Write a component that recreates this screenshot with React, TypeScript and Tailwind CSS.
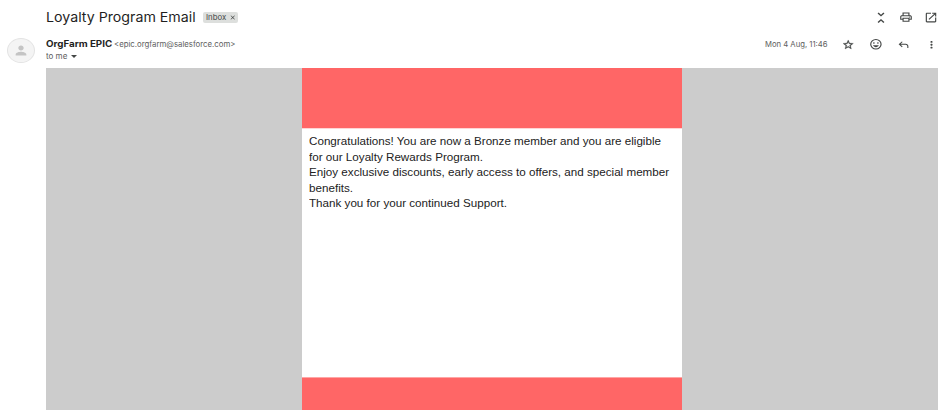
import type { ReactNode } from "react";

function Icon({ d, className, box = "0 0 24 24", children }: { d?: string; className: string; box?: string; children?: ReactNode }) {
  return (
    <svg viewBox={box} preserveAspectRatio="none" fill="currentColor" className={`shrink-0 ${className}`}>
      {d && <path d={d} />}
      {children}
    </svg>
  );
}

function Cell({ className, children }: { className: string; children: ReactNode }) {
  return <div className={`flex shrink-0 items-center justify-center ${className}`}>{children}</div>;
}

const lines = [
  "Congratulations! You are now a Bronze member and you are eligible",
  "for our Loyalty Rewards Program.",
  "Enjoy exclusive discounts, early access to offers, and special member",
  "benefits.",
  "Thank you for your continued Support.",
];

export default function App() {
  return (
    <div className="flex h-[410px] w-[940px] flex-col overflow-hidden bg-white font-['Inter','Liberation_Sans',sans-serif] text-[#444746]">
      <header className="flex h-[35px] shrink-0 items-center pl-[46px]">
        <h1 className="w-[157px] whitespace-nowrap text-[13.4px] leading-[35px] text-[#1f1f1f]">
          <span className="inline-block origin-left scale-x-[1.06]">Loyalty Program Email</span>
        </h1>
        <div className="flex h-[11px] w-[35px] items-center rounded-[2px] bg-[#dddfdd] pl-[3px] text-[7.6px] leading-[11px]">
          <span className="w-[23px]"><span className="inline-block origin-left scale-x-[1.03]">Inbox</span></span>
          <Icon className="h-[7px] w-[7.5px]" d="M19 6.41 17.59 5 12 10.59 6.41 5 5 6.41 10.59 12 5 17.59 6.41 19 12 13.41 17.59 19 19 17.59 13.41 12z" />
        </div>
        <div className="ml-auto flex items-center pr-[1px]">
          <Cell className="w-[26px]">
            <Icon className="h-[15.5px] w-[18px]" d="M7.41 18.59 8.83 20 12 16.83 15.17 20l1.41-1.41L12 14l-4.59 4.59zM16.59 5.41 15.17 4 12 7.17 8.83 4 7.41 5.41 12 10l4.59-4.59z" />
          </Cell>
          <Cell className="w-[24px]">
            <Icon className="h-[12.4px] w-[14px]" d="M19 8h-1V3H6v5H5c-1.66 0-3 1.34-3 3v6h4v4h12v-4h4v-6c0-1.66-1.34-3-3-3zM8 5h8v3H8V5zm8 12v2H8v-4h8v2zm2-2v-2H6v2H4v-4c0-.55.45-1 1-1h14c.55 0 1 .45 1 1v4h-2z">
              <circle cx="18" cy="11.5" r="1" />
            </Icon>
          </Cell>
          <Cell className="w-[21px] pl-[5px]">
            <Icon className="h-[13px] w-[14px]" d="M19 19H5V5h7V3H5c-1.11 0-2 .9-2 2v14c0 1.1.89 2 2 2h14c1.1 0 2-.9 2-2v-7h-2v7zM14 3v2h3.59l-9.83 9.83 1.41 1.41L19 6.41V10h2V3h-7z" />
          </Cell>
        </div>
      </header>

      <section className="flex h-[33px] shrink-0">
        <div className="w-[46px] pl-[7px] pt-[3px]">
          <div className="flex h-[25px] w-[28px] items-center justify-center rounded-[50%] border border-[#e3e3e3] bg-[#f4f4f4] text-[#c4c4c4]">
            <Icon className="h-[15px] w-[16px]" d="M12 12c2.21 0 4-1.79 4-4s-1.79-4-4-4-4 1.79-4 4 1.79 4 4 4zm0 2c-2.67 0-8 1.34-8 4v2h16v-2c0-2.66-5.33-4-8-4z" />
          </div>
        </div>
        <div className="pt-[3px]">
          <div className="flex h-[12px] items-center whitespace-nowrap leading-[12px]">
            <span className="w-[68px] text-[8.8px] font-bold text-[#1f1f1f]">
              <span className="inline-block origin-left scale-x-[1.11]">OrgFarm EPIC</span>
            </span>
            <span className="text-[7.8px] text-[#5e5e5e]">&lt;epic.orgfarm@salesforce.com&gt;</span>
          </div>
          <div className="flex h-[12px] items-center text-[7.8px] leading-[12px] text-[#5e5e5e]">
            <span className="w-[25px] whitespace-nowrap"><span className="inline-block origin-left scale-x-[1.03]">to me</span></span>
            <Icon className="h-[3px] w-[6px] text-[#444746]" box="0 0 10 5" d="M0 0h10L5 5z" />
          </div>
        </div>
        <div className="ml-auto flex h-[19px] items-center">
          <span className="w-[70px] whitespace-nowrap text-[7.8px] text-[#5e5e5e]">
            <span className="inline-block origin-left scale-x-[0.985]">Mon 4 Aug, 11:46</span>
          </span>
          <Cell className="w-[27.5px]">
            <Icon className="h-[11.4px] w-[12.4px] stroke-current stroke-[0.6]" d="m22 9.24-7.19-.62L12 2 9.19 8.63 2 9.24l5.46 4.73L5.82 21 12 17.27 18.18 21l-1.63-7.03L22 9.24zM12 15.4l-3.76 2.27 1-4.28-3.32-2.88 4.38-.38L12 6.1l1.71 4.04 4.38.38-3.32 2.88 1 4.28L12 15.4z" />
          </Cell>
          <Cell className="w-[28px]">
            <Icon className="h-[12.6px] w-[13.8px]">
              <circle cx="12" cy="12" r="9" fill="none" stroke="currentColor" strokeWidth="2" />
              <circle cx="8.5" cy="9.5" r="1.5" />
              <circle cx="15.5" cy="9.5" r="1.5" />
              <path d="M6.9 14h10.2c-.8 2-2.8 3.5-5.1 3.5S7.7 16 6.9 14z" />
            </Icon>
          </Cell>
          <Cell className="w-[27px]">
            <Icon className="h-[11.5px] w-[13px]" box="0 -960 960 960" d="M760-200v-160q0-50-35-85t-85-35H273l144 144-57 56-240-240 240-240 57 56-144 144h367q83 0 141.5 58.5T840-360v160h-80Z" />
          </Cell>
          <Cell className="w-[23px] pl-[6px]">
            <Icon className="h-[11.5px] w-[13px]" d="M12 8c1.1 0 2-.9 2-2s-.9-2-2-2-2 .9-2 2 .9 2 2 2zm0 2c-1.1 0-2 .9-2 2s.9 2 2 2 2-.9 2-2-.9-2-2-2zm0 6c-1.1 0-2 .9-2 2s.9 2 2 2 2-.9 2-2-.9-2-2-2z" />
          </Cell>
        </div>
      </section>

      <main className="ml-[46px] flex min-h-0 w-[892px] flex-1 bg-[#cccccc]">
        <article className="ml-[256px] flex w-[380px] flex-col bg-white">
          <div className="h-[60px] shrink-0 bg-[#ff6666]" />
          <div className="h-[250px] shrink-0 border-b border-t border-b-[#ffa6a6] border-t-[#ffd5d5] pl-[6.5px] pt-[5.35px] font-['Liberation_Sans',Arial,sans-serif] text-[10.8px] leading-[15.4px] text-[#222222]">
            {lines.map((line) => (
              <p key={line} className="w-max origin-left scale-x-[1.078] whitespace-nowrap">{line}</p>
            ))}
          </div>
          <div className="flex-1 bg-[#ff6666]" />
        </article>
      </main>
    </div>
  );
}
